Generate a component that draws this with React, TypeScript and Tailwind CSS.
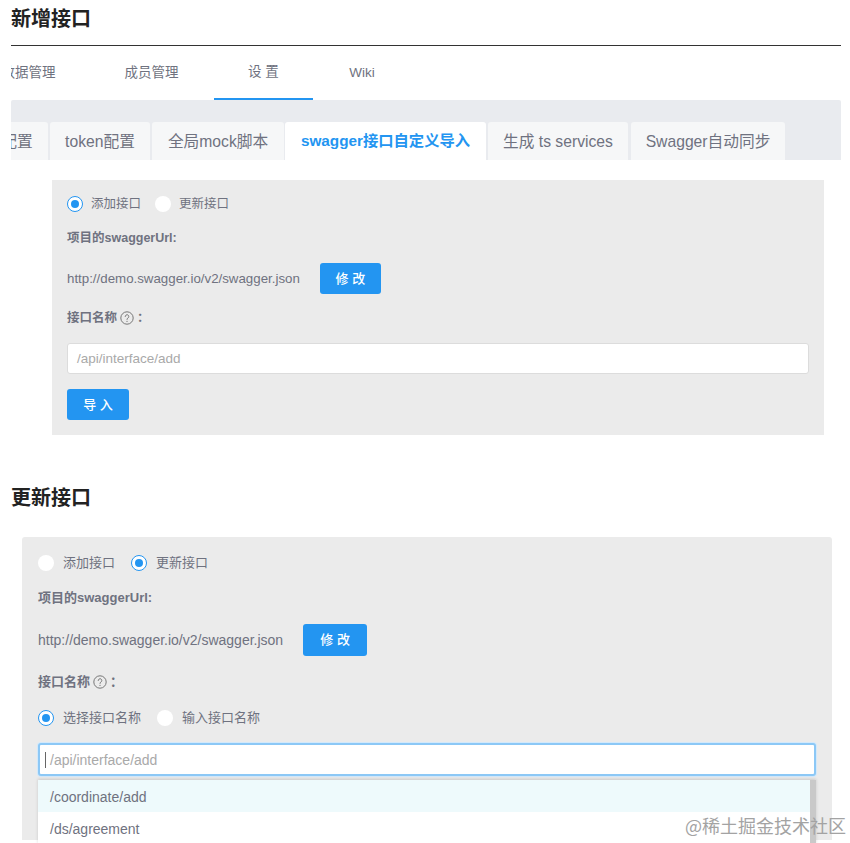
import React from 'react';

const fontStack = { fontFamily: '"Liberation Sans", "Noto Sans CJK SC", sans-serif' };

const Radio: React.FC<{ checked?: boolean; label: string; small?: boolean }> = ({ checked, label, small }) => (
  <div className="flex items-center">
    {checked ? (
      <span className="flex h-[16px] w-[16px] items-center justify-center rounded-full border border-[#2395f1] bg-white">
        <span className="h-[8px] w-[8px] rounded-full bg-[#2395f1]" />
      </span>
    ) : (
      <span className="h-[16px] w-[16px] rounded-full bg-white" />
    )}
    <span className={small ? 'ml-[8px] pt-px text-[12.5px] text-[#6f7280]' : 'ml-[9px] text-[13px] text-[#6f7280]'}>{label}</span>
  </div>
);

const HelpIcon = () => (
  <svg width="14" height="14" viewBox="0 0 14 14" fill="none" stroke="#777" strokeWidth="1" className="mx-[3px]">
    <circle cx="7" cy="7" r="6.2" />
    <path d="M5.2 5.5a1.8 1.8 0 1 1 2.8 1.5c-.7.4-1 .8-1 1.4" strokeLinecap="round" />
    <circle cx="7" cy="10.4" r=".55" fill="#777" stroke="none" />
  </svg>
);

const tabs = [
  { label: '配置', cls: 'w-[75px] pl-[13px]' },
  { label: 'token配置', cls: 'w-[100px]' },
  { label: '全局mock脚本', cls: 'w-[132px]' },
  { label: 'swagger接口自定义导入', cls: 'w-[201px] ml-[-1px]' },
  { label: '生成 ts services', cls: 'w-[140px]' },
  { label: 'Swagger自动同步', cls: 'w-[154px] ml-[1px]' },
];

const App: React.FC = () => {
  return (
    <div className="relative h-[843px] w-[850px] overflow-hidden bg-white text-[#555]" style={fontStack}>
      <div className="pl-[11px] pr-[9px]">
        <h2 className="h-[45px] pt-[6px] text-[20px] leading-[27px] font-bold text-[#222]">新增接口</h2>
        <div className="h-px bg-[#333]" />

        <nav className="flex h-[54px] overflow-hidden">
          <div className="ml-[-29px] flex h-[53px] w-[93px] shrink-0 items-center justify-center pt-px text-[13.5px] text-[#6f7280]">
            数据管理
          </div>
          <div className="ml-[27px] flex h-[53px] w-[99px] shrink-0 items-center justify-center pt-px text-[13.5px] text-[#6f7280]">
            成员管理
          </div>
          <div className="ml-[13px] flex h-[54px] w-[99px] shrink-0 items-center justify-center border-b-2 border-[#2395f1] pt-px text-[13.5px] text-[#6f7280]">
            设 置
          </div>
          <div className="flex h-[53px] w-[98px] shrink-0 items-center justify-center pt-px text-[13.5px] text-[#6f7280]">Wiki</div>
        </nav>

        <div className="flex h-[60px] items-end overflow-hidden rounded-t-[2px] bg-[#e9ebef]">
          <div className="ml-[-38px] flex gap-[2px]">
            {tabs.map((tab, i) => (
              <div
                key={tab.label}
                className={`flex h-[38px] shrink-0 items-center justify-center rounded-t-[3px] pt-px ${tab.cls} ${
                  i === 3 ? 'bg-white text-[15.3px] font-bold text-[#2395f1]' : 'bg-[#f6f7f8] text-[15.7px] text-[#6f7280]'
                }`}
              >
                {tab.label}
              </div>
            ))}
          </div>
        </div>
      </div>

      <section className="mt-[20px] ml-[52px] flex h-[255px] w-[772px] flex-col bg-[#ebebeb] pt-[15px] pl-[15px]">
        <div className="flex h-[18px] items-center gap-[14px]">
          <Radio small checked label="添加接口" />
          <Radio small label="更新接口" />
        </div>
        <div className="mt-[16px] text-[12.5px] leading-[18px] font-bold text-[#6f7280]">项目的swaggerUrl:</div>
        <div className="mt-[16px] flex items-center">
          <span className="text-[13.3px] text-[#6f7280]">http://demo.swagger.io/v2/swagger.json</span>
          <button className="ml-[20px] h-[31px] w-[61px] rounded-[3px] bg-[#2395f1] text-[13px] font-medium text-white">修 改</button>
        </div>
        <div className="mt-[15px] flex h-[18px] items-center text-[12.5px] font-bold text-[#6f7280]">
          接口名称 <HelpIcon /> ：
        </div>
        <div className="mt-[16px] flex h-[31px] w-[742px] items-center rounded-[3px] border border-[#dcdcdc] bg-white pt-px pl-[9px] text-[13.5px] text-[#a9a9a9]">
          /api/interface/add
        </div>
        <button className="mt-[15px] h-[31px] w-[62px] rounded-[3px] bg-[#2395f1] text-[13px] font-medium text-white">导 入</button>
      </section>

      <h2 className="mt-[50px] ml-[11px] h-[52px] text-[20px] leading-[27px] font-bold text-[#222]">更新接口</h2>

      <section className="relative ml-[22px] flex h-[303px] w-[810px] flex-col rounded-t-[3px] bg-[#ebebeb] pt-[17px] pl-[16px]">
        <div className="flex h-[18px] items-center gap-[16px]">
          <Radio label="添加接口" />
          <Radio checked label="更新接口" />
        </div>
        <div className="mt-[17px] text-[13px] leading-[18px] font-bold text-[#6f7280]">项目的swaggerUrl:</div>
        <div className="mt-[17px] flex items-center">
          <span className="text-[14px] text-[#6f7280]">http://demo.swagger.io/v2/swagger.json</span>
          <button className="ml-[20px] h-[32px] w-[64px] rounded-[3px] bg-[#2395f1] text-[13px] font-medium text-white">修 改</button>
        </div>
        <div className="mt-[17px] flex h-[18px] items-center text-[13px] font-bold text-[#6f7280]">
          接口名称 <HelpIcon /> ：
        </div>
        <div className="mt-[18px] flex h-[18px] items-center gap-[16px]">
          <Radio checked label="选择接口名称" />
          <Radio label="输入接口名称" />
        </div>
        <div className="mt-[16px] flex h-[33px] w-[778px] items-center rounded-[3px] border-2 border-[#8cc8f6] bg-white pt-px pl-[5px] text-[14px] text-[#a9a9a9] shadow-[0_0_0_1px_#d3e9fb]">
          <span className="mr-[4px] h-[16px] w-px bg-[#666]" />
          /api/interface/add
        </div>
        <div className="absolute top-[243px] left-[16px] w-[778px] bg-white shadow-[0_-1px_3px_rgba(0,0,0,0.15)]">
          <div className="flex h-[32px] items-center bg-[#eefafc] pt-[2px] pl-[12px] text-[14px] text-[#6f7280]">/coordinate/add</div>
          <div className="flex h-[32px] items-center pt-[2px] pl-[12px] text-[14px] text-[#6f7280]">/ds/agreement</div>
          <div className="absolute top-0 right-0 h-[64px] w-[6px] bg-[#c9c9c9]" />
        </div>
      </section>

      <div className="absolute top-[814px] left-[685px] text-[18px] leading-[22px] text-[#a3a3a3]" style={{ fontFamily: '"Noto Sans CJK SC", sans-serif' }}>
        @稀土掘金技术社区
      </div>
    </div>
  );
};

export default App;
